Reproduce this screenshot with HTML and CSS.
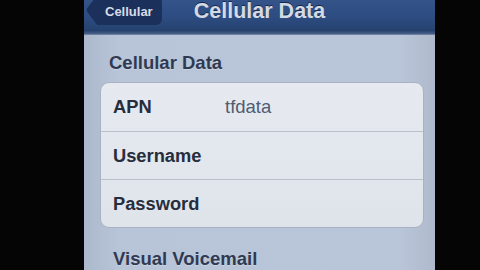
FILE: index.html
```html
<!DOCTYPE html>
<html>
<head>
<meta charset="utf-8">
<link rel="stylesheet" href="styles.css">
</head>
<body>
<div class="screen">
  <div class="navbar">
    <div class="back">Cellular</div>
    <div class="title">Cellular Data</div>
  </div>
  <div class="content">
    <div class="section-header">Cellular Data</div>
    <div class="group">
      <div class="row"><span class="label">APN</span><span class="value">tfdata</span></div>
      <div class="row"><span class="label">Username</span></div>
      <div class="row"><span class="label">Password</span></div>
    </div>
    <div class="section-header second">Visual Voicemail</div>
  </div>
</div>
</body>
</html>
```
FILE: styles.css
```css
html, body {
  margin: 0;
  padding: 0;
  background: #050506;
  width: 480px;
  height: 270px;
  overflow: hidden;
  font-family: "Liberation Sans", Arial, sans-serif;
}
.screen {
  margin-left: 84px;
  width: 351px;
  height: 270px;
  background: linear-gradient(90deg, #acb8cb 0%, #b8c4d7 10%, #b9c5d8 90%, #aeb9cc 100%);
  display: flex;
  flex-direction: column;
  overflow: hidden;
}
.navbar {
  height: 34px;
  flex: none;
  position: relative;
  display: flex;
  align-items: flex-start;
  background: linear-gradient(180deg, #34548a 0%, #2d4c81 50%, #25426f 90%, #4a6288 100%);
  border-bottom: 1px solid #6c7fa0;
}
.back {
  position: relative;
  margin-top: -4px;
  margin-left: 13px;
  height: 29px;
  padding: 2px 9px 0 8px;
  display: flex;
  align-items: center;
  background: #1b315c;
  border-radius: 0 6px 6px 0;
  color: #d6dce8;
  font-weight: bold;
  font-size: 13px;
  box-sizing: border-box;
  z-index: 1;
}
.back::before {
  content: "";
  position: absolute;
  left: -9px;
  top: 4px;
  width: 20px;
  height: 20px;
  background: #1b315c;
  transform: rotate(45deg) skew(8deg, 8deg);
  border-radius: 3px;
  z-index: -1;
}
.title {
  position: absolute;
  left: 0;
  right: 0;
  top: 0;
  text-align: center;
  color: #d4dae4;
  font-weight: bold;
  font-size: 21.5px;
  line-height: 23px;
  text-shadow: 0 -1px 0 #13284c;
}
.content {
  flex: 1;
  display: flex;
  flex-direction: column;
  padding: 0 11px 0 16px;
}
.section-header {
  color: #2f3a52;
  font-weight: bold;
  font-size: 18.5px;
  line-height: 18px;
  padding: 19px 0 10px 9px;
  text-shadow: 0 1px 0 #c9d3e2;
}
.section-header.second {
  padding-top: 22px;
  padding-left: 13px;
}
.group {
  background: linear-gradient(180deg, #e6eaf0 0%, #dfe4eb 100%);
  border: 1px solid #a8b2c2;
  border-radius: 9px;
  display: flex;
  flex-direction: column;
}
.row {
  height: 47px;
  display: flex;
  align-items: center;
  padding-left: 12px;
  border-top: 1px solid #b9c0cc;
}
.row:first-child {
  border-top: none;
  height: 48px;
}
.label {
  width: 112px;
  flex: none;
  color: #262d3c;
  font-weight: bold;
  font-size: 18.3px;
}
.value {
  color: #505b74;
  font-size: 18.5px;
}
```
